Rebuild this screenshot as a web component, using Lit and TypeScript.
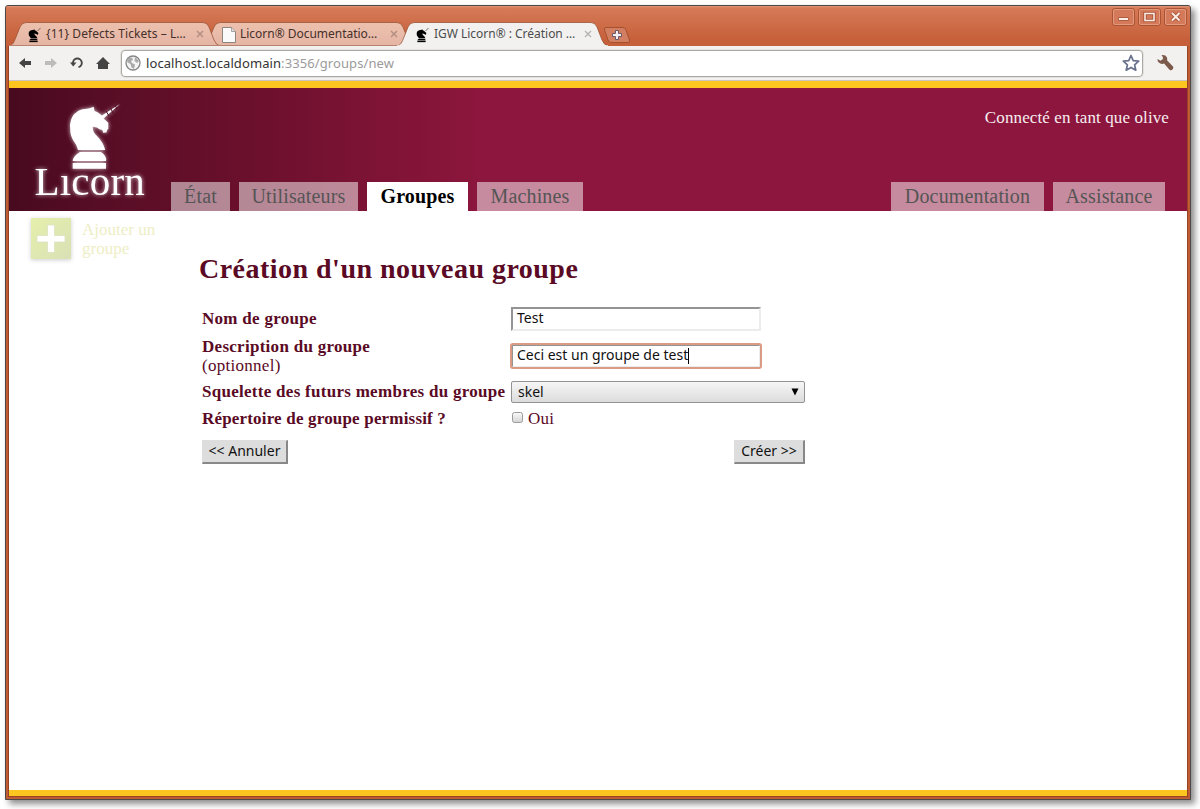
import { LitElement, html, css, svg } from "lit";
import { customElement, property } from "lit/decorators.js";

const horse = svg`
  <path d="M84.700 18.700L85.500 23Q88 23.500 91 26Q93 27 94 30L99.300 34.700V41Q98 41 97.500 44.500L94 44.700Q94 41 91 41.500Q88 38.500 83.700 38.700Q83.500 44 88 48Q94 54 96.300 62H69Q68 57 64 52Q61 46 61.300 42Q60.500 36 62 32Q64 26 67 24.700Q71 21 76 21Q81 20.500 84.700 18.700Z"/>
  <path d="M71 64H92Q98 68 97 73H63.700Q64 68 71 64Z"/>
  <path d="M63.700 75H97V80.700H63.700Z"/>`;

@customElement("browser-tab")
class BrowserTab extends LitElement {
  @property() label = "";
  @property() icon = "horse";
  @property({ type: Boolean, reflect: true }) active = false;

  static styles = css`
    :host { display: flex; align-items: center; position: relative; z-index: 1; width: 211px; height: 24px; margin-right: -17px; box-sizing: border-box; padding: 0 0 0 18px; flex: none; font: 12px/16px "Noto Sans", sans-serif; color: #45302a; }
    :host([active]) { z-index: 3; color: #4c4c4c; }
    :host(:first-child) { z-index: 2; }
    .shape { position: absolute; left: 0; top: 0; width: 211px; height: 24px; }
    .fav { width: 16px; height: 16px; position: relative; flex: none; margin: 1px 3px 0 0; }
    .label { position: relative; width: 147px; white-space: nowrap; margin-top: -1px; letter-spacing: .07px; }
    :host([active]) .label, :host([icon="page"]) .label { letter-spacing: -.02px; }
    .x { position: relative; width: 8px; height: 8px; margin-left: 3px; }
  `;

  render() {
    return html`
      <svg class="shape" viewBox="0 0 211 24">
        <defs><linearGradient id="g" x2="0" y2="1"><stop stop-color="#edc0ae"/><stop offset="1" stop-color="#e5b5a4"/></linearGradient></defs>
        <path d="M0 24C4 23 5 20 7 15L11 5Q13 .5 17 .5H194Q198 .5 200 5L205 18Q207 23 211 24Z" fill=${this.active ? "#f2f1f0" : "url(#g)"}/>
        <path d="M0 24C4 23 5 20 7 15L11 5Q13 .5 17 .5H194Q198 .5 200 5L205 18Q207 23 211 24" fill="none" stroke="#984f32" stroke-opacity=".75"/>
        ${this.active ? svg`<path d="M0 24H211" stroke="#f2f1f0" stroke-width="1.5"/>` : svg`<path d="M0 23.5H211" stroke="#b78370"/>`}
      </svg>
      <svg class="fav" viewBox="0 0 16 16">
        ${this.icon === "horse"
          ? svg`<g transform="translate(-13.600 -1.400) scale(.25 .205)">${horse}</g><path d="M10.500 4L13.500 1" stroke="#6b5a55" stroke-width=".9"/>`
          : svg`<path d="M1.500 .5H10.500L14.500 4.500V15.500H1.500Z" fill="#fafafa" stroke="#8d8580"/><path d="M10.500 .5V4.500H14.500" fill="#ddd" stroke="#8d8580" stroke-width=".7"/>`}
      </svg>
      <span class="label">${this.label}</span>
      <svg class="x" viewBox="0 0 8 8"><path d="M1 1L7 7M7 1L1 7" stroke=${this.active ? "#b5b3b1" : "#b08d80"} stroke-width="1.4"/></svg>
    `;
  }
}

@customElement("app-root")
class AppRoot extends LitElement {
  static styles = css`
    :host { display: block; width: 1200px; height: 809px; overflow: hidden; background: #fff; padding: 5px 0 0 5px; box-sizing: border-box; font-family: "Liberation Serif", serif; }
    * { box-sizing: border-box; }
    .window { width: 1186px; height: 795px; display: flex; flex-direction: column; border: 1px solid #4b4847; border-radius: 3px 3px 0 0; background: #bf5c33; padding: 0 3px 3px; box-shadow: 4px 4px 6px rgba(0,0,0,.45); }
    .title { height: 40px; margin: 0 -3px; padding: 0 3px; background: linear-gradient(#e39a7a 0, #d67a57 2px, #c6603a 34px); display: flex; align-items: flex-end; flex: none; border-radius: 2px 2px 0 0; }
    .tabs { display: flex; align-items: flex-end; height: 24px; }
    .plus { width: 28px; height: 16px; margin: 0 0 3px 12px; }
    .winbtns { margin-left: auto; align-self: flex-start; display: flex; gap: 3px; padding: 2px 0 0; }
    .wb { width: 23px; height: 18px; display: block; }
    .inner { flex: 1; display: flex; flex-direction: column; min-height: 0; background: #fff; outline: 1px solid #974324; clip-path: inset(0 -1px -1px -1px); }
    .toolbar { height: 35px; flex: none; background: #f2f1f0; border-bottom: 1px solid #c8c5c1; display: flex; align-items: center; padding: 0 14px 0 9px; }
    .nav { width: 14px; height: 14px; margin-right: 12px; flex: none; }
    .url { flex: 1; height: 27px; border: 1px solid #aaa8a2; border-radius: 4px; background: #fff; box-shadow: 0 0 0 1px #e4e2df; display: flex; align-items: center; padding: 0 2px 0 3px; margin: 0 13px 0 -1px; color: #9b9b9b; font: 13px/18px "Noto Sans", sans-serif; letter-spacing: .09px; }
    .url b { font-weight: 400; color: #333; }
    .url span { margin-top: -1px; }
    .url .globe { width: 16px; height: 16px; margin-right: 5px; }
    .url .star { width: 18px; height: 18px; margin-left: auto; }
    .wrench { width: 18px; height: 18px; margin-right: -1px; }
    .bar { height: 7px; background: #fcc520; flex: none; }
    .bar.end { height: 6px; margin-top: auto; }
    .head { height: 123px; flex: none; display: flex; background: linear-gradient(90deg, #480a1f 0, #5b0e27 120px, #6b102c 240px, #8c163d 470px, #8c163d 100%); }
    .logo { width: 162px; height: 123px; flex: none; }
    .logo g { filter: drop-shadow(0 0 2px rgba(255,255,255,.75)); }
    .logo text { font: 41px "Liberation Serif", serif; letter-spacing: .2px; }
    .right { flex: 1; display: flex; flex-direction: column; justify-content: space-between; }
    .user { align-self: flex-end; margin: 20px 18px 0 0; font-size: 17px; line-height: 20px; letter-spacing: .11px; color: #f7eef1; }
    .menu { display: flex; gap: 9px; padding-right: 22px; }
    .menu a { height: 29px; line-height: 29px; font-size: 20px; text-align: center; color: #555; background: rgba(255,255,255,.5); letter-spacing: .15px; }
    .menu a.on { background: #fff; color: #000; font-weight: 700; }
    .w59 { width: 59px; } .w119 { width: 119px; } .w101 { width: 101px; } .w106 { width: 106px; }
    .w153 { width: 153px; margin-left: auto; } .w112 { width: 112px; }
    .body { display: flex; color: #5a0a25; }
    .side { width: 190px; padding: 7px 0 0 22px; display: flex; gap: 11px; color: #eeeec6; font-size: 17px; line-height: 19px; }
    .side svg { width: 40px; height: 41px; filter: drop-shadow(0 1px 2px rgba(0,0,0,.2)); }
    .side div { padding-top: 2px; width: 85px; }
    .main { width: 620px; padding-top: 41px; }
    h1 { margin: 0 0 22px; font-size: 28px; line-height: 33px; letter-spacing: .48px; white-space: nowrap; }
    .form { display: grid; grid-template-columns: 309px 294px; grid-template-rows: 24px 38px 22px 20px; row-gap: 6px; align-items: center; margin-left: 3px; font-size: 17px; line-height: 19px; letter-spacing: .28px; white-space: nowrap; }
    .form > b { padding-bottom: 2px; }
    .form > b.perm { letter-spacing: .18px; }
    .ctl { font: 14px/17px "Noto Sans", sans-serif; letter-spacing: 0; color: #111; }
    .field { width: 250px; height: 24px; border: 2px solid; border-color: #949494 #ececec #ececec #949494; padding: 0 0 0 4px; line-height: 18px; display: flex; }
    .focus { outline: 2px solid #d99b83; outline-offset: -1px; border-radius: 2px; }
    .caret { width: 1px; height: 16px; background: #000; margin-top: 2px; }
    .select { width: 294px; height: 22px; border: 1px solid #939393; border-radius: 2px; background: linear-gradient(#f6f6f6, #dcdcdc); display: flex; align-items: center; justify-content: space-between; padding: 0 5px 1px 6px; }
    .select svg { width: 8px; height: 8px; }
    .check { display: flex; align-items: center; gap: 5px; padding-bottom: 1px; }
    .box { width: 11px; height: 11px; border: 1px solid #9a9a9a; border-radius: 2.5px; background: linear-gradient(#f8f8f8, #d5d5d5); margin: -2px 0 0 1px; }
    .btns { display: flex; justify-content: space-between; width: 603px; margin: 11px 0 0 3px; }
    .btn { height: 24px; border: 1px solid #ddd; border-right: 2px solid #888; border-bottom: 2px solid #888; background: #ddd; text-align: center; line-height: 20px; white-space: nowrap; }
    .b1 { width: 86px; } .b2 { width: 71px; }
  `;

  private winButton(glyph: unknown) {
    return html`<svg class="wb" viewBox="0 0 23 18"><rect x=".5" y=".5" width="22" height="17" rx="2.5" fill="#d4795a" stroke="#ad5233"/><rect x="1.5" y="1.5" width="20" height="15" rx="1.5" fill="none" stroke="#e29a7d"/>${glyph}</svg>`;
  }

  render() {
    return html`
      <div class="window">
        <div class="title">
          <div class="tabs">
            <browser-tab label="{11} Defects Tickets – L…"></browser-tab>
            <browser-tab label="Licorn® Documentatio…" icon="page"></browser-tab>
            <browser-tab active label="IGW Licorn® : Création …"></browser-tab>
          </div>
          <svg class="plus" viewBox="0 0 28 16"><path d="M3 .5H20Q22 .5 23 3L26.500 13Q27 15.500 25 15.500H8Q6 15.500 5 13L1.500 3Q1 .5 3 .5Z" fill="#d27e60" stroke="#a5512f"/><path d="M12.500 3.500h3v3h3v3h-3v3h-3v-3h-3v-3h3Z" fill="#f5eeee" stroke="#6a5968"/></svg>
          <div class="winbtns">
            ${this.winButton(svg`<path d="M6.500 11H16.500" stroke="#a34e30" stroke-width="4"/><path d="M7 11H16" stroke="#f9ede6" stroke-width="2.200"/>`)}
            ${this.winButton(svg`<rect x="7" y="5.500" width="9" height="7" fill="none" stroke="#a34e30" stroke-width="3.200"/><rect x="7" y="5.500" width="9" height="7" fill="none" stroke="#f9ede6" stroke-width="1.600"/>`)}
            ${this.winButton(svg`<path d="M8 5L15.500 12.500M15.500 5L8 12.500" stroke="#a34e30" stroke-width="3.800"/><path d="M8 5L15.500 12.500M15.500 5L8 12.500" stroke="#f9ede6" stroke-width="2"/>`)}
          </div>
        </div>
        <div class="inner">
          <div class="toolbar">
            <svg class="nav" viewBox="0 0 14 14"><path d="M1 7L7 2V5H13V9H7V12Z" fill="#454545"/></svg>
            <svg class="nav" viewBox="0 0 14 14"><path d="M13 7L7 2V5H1V9H7V12Z" fill="#bdbcbb"/></svg>
            <svg class="nav" viewBox="0 0 14 14"><path d="M3 7A4.400 4.400 0 1 1 8.500 11.200" fill="none" stroke="#454545" stroke-width="1.900"/><path d="M0 6.500H6.500L3.200 10.500Z" fill="#454545"/></svg>
            <svg class="nav" viewBox="0 0 14 14"><path d="M7 1L14 8H12V13H2V8H0Z" fill="#444"/></svg>
            <div class="url">
              <svg class="globe" viewBox="0 0 16 16"><circle cx="8" cy="8" r="7" fill="#f4f4f4" stroke="#868686" stroke-width="1.300"/><path d="M3 3L7 2.500L8 5L6 6L7 8L10 9.500L9 14L6.500 12.500L5.500 9L2 7ZM10 2L14 6L12 8L9.500 6Z" fill="#aaa"/></svg>
              <span><b>localhost.localdomain</b>:3356/groups/new</span>
              <svg class="star" viewBox="0 0 18 18"><path d="M9 1.500L11.200 6.600L16.700 7.100L12.600 10.800L13.800 16.200L9 13.400L4.200 16.200L5.400 10.800L1.300 7.100L6.800 6.600Z" fill="#fff" stroke="#68718c" stroke-width="1.700" stroke-linejoin="round"/></svg>
            </div>
            <svg class="wrench" viewBox="0 0 18 18"><path d="M5.500 1.200Q9.500 .5 11 3.500Q11.500 5 11 6.200L17 12.500Q18 14 16.500 15.500Q15 17 13.500 15.700L8 9.600Q5 10.500 2.800 8.600Q1.200 7 1.500 5L4.500 6.800L7 5L6.800 3Z" fill="#7b5a4c"/></svg>
          </div>
          <div class="bar"></div>
          <div class="head">
            <svg class="logo" viewBox="0 0 162 123" fill="#fff">
              <g>
                ${horse}
                <path d="M92 28L111 16L94 31Z"/>
                <text x="25.500" y="107">Lıcorn</text>
              </g>
              <path d="M97 23L100 28M101.500 20L104 25M106 17L108 21" stroke="#4f0c22"/>
            </svg>
            <div class="right">
              <div class="user">Connecté en tant que olive</div>
              <div class="menu">
                <a class="w59">État</a><a class="w119">Utilisateurs</a><a class="w101 on">Groupes</a><a class="w106">Machines</a><a class="w153">Documentation</a><a class="w112">Assistance</a>
              </div>
            </div>
          </div>
          <div class="body">
            <div class="side">
              <svg viewBox="0 0 40 41"><defs><linearGradient id="a" x2="1" y2="1"><stop stop-color="#e6f0ac"/><stop offset="1" stop-color="#d9e0b5"/></linearGradient></defs><rect width="40" height="41" fill="url(#a)"/><path d="M16.500 7h7v10.500H34v6.500H23.500V34.500h-7V24H6V17.500H16.500Z" fill="#fff" stroke="#dbe1c0" stroke-width=".8"/></svg>
              <div>Ajouter un groupe</div>
            </div>
            <div class="main">
              <h1>Création d'un nouveau groupe</h1>
              <div class="form">
                <b>Nom de groupe</b><div class="ctl field">Test</div>
                <div><b>Description du groupe</b><br>(optionnel)</div><div class="ctl field focus">Ceci est un groupe de test<span class="caret"></span></div>
                <b>Squelette des futurs membres du groupe</b>
                <div class="ctl select">skel<svg viewBox="0 0 8 8"><path d="M.5 .5H7.500L4 7.500Z"/></svg></div>
                <b class="perm">Répertoire de groupe permissif ?</b><div class="check"><span class="box"></span>Oui</div>
              </div>
              <div class="btns"><div class="ctl btn b1">&lt;&lt; Annuler</div><div class="ctl btn b2">Créer &gt;&gt;</div></div>
            </div>
          </div>
          <div class="bar end"></div>
        </div>
      </div>
    `;
  }
}
